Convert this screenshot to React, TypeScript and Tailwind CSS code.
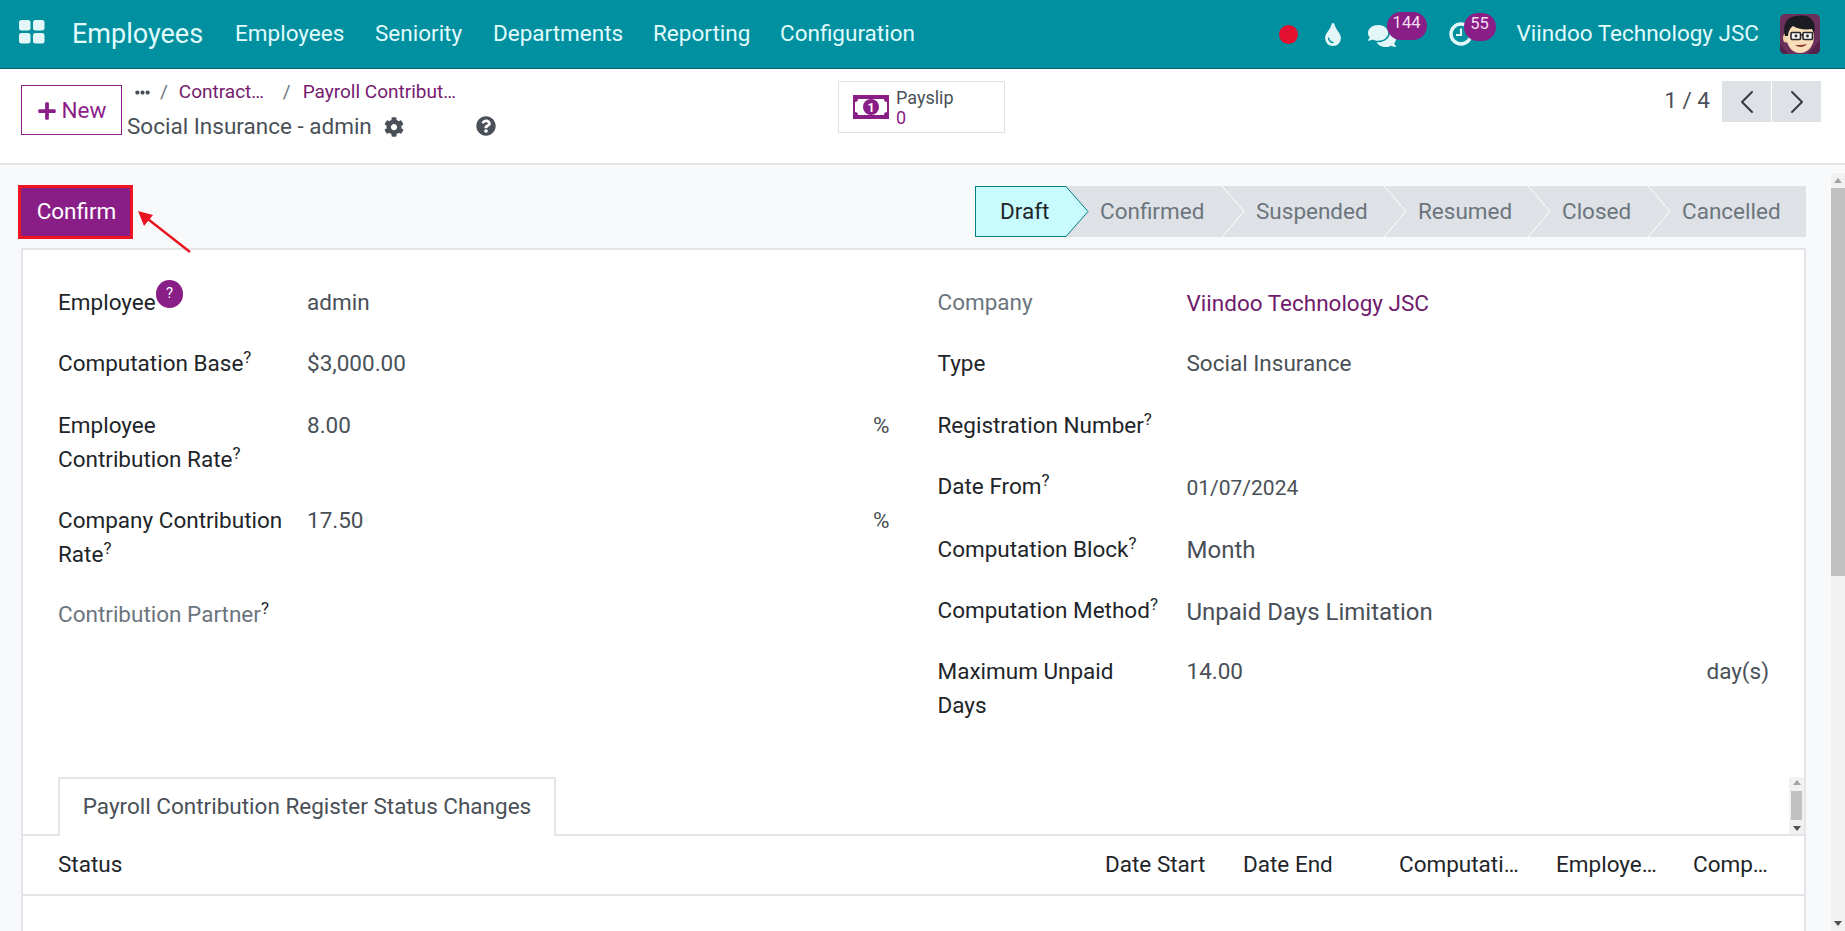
import { ChevronLeft, ChevronRight } from "lucide-react";
import { FaCog, FaComments, FaEllipsisH, FaPlus, FaQuestionCircle, FaTint } from "react-icons/fa";

const menu = [
  { label: "Employees", width: "w-[140px]" },
  { label: "Seniority", width: "w-[118px]" },
  { label: "Departments", width: "w-[160px]" },
  { label: "Reporting", width: "w-[127px]" },
  { label: "Configuration", width: "w-[140px]" },
];

const steps = [
  { label: "Confirmed", width: "w-[156px]", arrow: true },
  { label: "Suspended", width: "w-[162px]", arrow: true },
  { label: "Resumed", width: "w-[144px]", arrow: true },
  { label: "Closed", width: "w-[120px]", arrow: true },
  { label: "Cancelled", width: "w-[158px]", arrow: false },
];

const Sup = () => <sup className="text-[17px] top-[-8px] text-[#212529]">?</sup>;

const Row = ({
  label,
  children,
  unit,
  muted,
  help,
}: {
  label: React.ReactNode;
  children?: React.ReactNode;
  unit?: string;
  muted?: boolean;
  help?: boolean;
}) => (
  <div className="flex pb-[27.4px] leading-[34px]">
    <div className={`w-[249px] shrink-0 pr-[24px] ${muted ? "text-[#6c757d]" : "text-[#212529]"}`}>
      {label}
      {help && <Sup />}
    </div>
    <div className="flex-1 text-[#495057]">{children}</div>
    {unit && <div className="text-[#495057]">{unit}</div>}
  </div>
);

const Avatar = () => (
  <svg viewBox="0 0 40 40" className="w-10 h-10 rounded-[5px] ml-[21px]">
    <rect width="40" height="40" fill="#6b2f5c" />
    <path d="M0 30l8 10H0zM40 26v14H28z" fill="#52224a" />
    <ellipse cx="6" cy="24" rx="3" ry="4.5" fill="#f2d0a4" />
    <path d="M6 20c0 12 6 19 14 19s14-7 14-17c0-6-2-10-4-12H10c-2 2-4 5-4 10z" fill="#f8dfba" />
    <path d="M5 22C2 10 7 3 16 2c5-1 13-1 16 4 3 3 3 9 2 14l-2-5c-7 1-15 0-19-3-3 2-5 6-5 10z" fill="#1b1b22" />
    <rect x="11" y="18.5" width="9.5" height="7" rx="1" fill="#f4f4f0" stroke="#26262c" strokeWidth="1.6" />
    <rect x="23" y="18.5" width="9.5" height="7" rx="1" fill="#f4f4f0" stroke="#26262c" strokeWidth="1.6" />
    <path d="M20.5 21H23" stroke="#26262c" strokeWidth="1.6" />
    <circle cx="16" cy="22" r="1.4" fill="#26262c" />
    <circle cx="27.5" cy="22" r="1.4" fill="#26262c" />
    <path d="M15 31c4 3 9 2.5 12-1-4 1-8 1.300-12 1z" fill="#8c3b35" />
  </svg>
);

const MoneyIcon = () => (
  <svg viewBox="0 0 36 24" className="w-9 h-6 shrink-0">
    <path fillRule="evenodd" fill="#8a1e87" d="M0 0h36v24H0zM5 4c0 2-1 3-3 3v10c2 0 3 1 3 3h26c0-2 1-3 3-3V7c-2 0-3-1-3-3z" />
    <circle cx="18" cy="12" r="8" fill="#8a1e87" />
    <text x="18" y="16.5" textAnchor="middle" fontSize="12.5" fontWeight="700" fill="#fff" fontFamily="Roboto">1</text>
  </svg>
);

export default function App() {
  return (
    <div className="h-[931px] w-[1845px] overflow-hidden flex flex-col bg-white font-['Roboto',sans-serif] text-[22.5px]">
      <header className="h-[69px] shrink-0 bg-[#00909f] border-b border-[#0b5f68] flex items-center text-[#e0fbfd]">
        <svg viewBox="0 0 26 24" className="w-[26px] h-[24px] ml-[19px] -mt-[4px]" fill="#e4f7f8">
          <rect width="11.5" height="10.5" rx="2.5" />
          <rect x="14" width="11.5" height="10.5" rx="2.5" />
          <rect y="13" width="11.5" height="10.5" rx="2.5" />
          <rect x="14" y="13" width="11.5" height="10.5" rx="2.5" />
        </svg>
        <div className="ml-[27px] w-[163px] text-[27px]">Employees</div>
        {menu.map((m) => (
          <div key={m.label} className={`${m.width} text-[22.5px]`}>
            {m.label}
          </div>
        ))}
        <div className="ml-auto flex items-center pr-[25px]">
          <div className="w-[19px] h-[19px] rounded-full bg-[#e3102f]" />
          <div className="ml-[26px] w-[18px] flex justify-center">
            <FaTint className="text-[#e4f7f8]" size={23} />
          </div>
          <div className="relative ml-[26px] w-[28px] h-[25px]">
            <FaComments className="text-[#e4f7f8]" size={28} />
            <span className="absolute left-[19px] -top-[10px] w-[40px] h-[28px] rounded-full bg-[#8a1e87] text-[16.5px] leading-[22px] text-center text-[#f4dff3]">
              144
            </span>
          </div>
          <div className="relative ml-[53px] w-[24px] h-[24px]">
            <svg viewBox="0 0 24 24" className="w-[24px] h-[24px]" fill="none" stroke="#e4f7f8">
              <circle cx="12" cy="12" r="10" strokeWidth="3.4" />
              <path d="M12 6.5V13H7" strokeWidth="2.2" />
            </svg>
            <span className="absolute left-[15px] -top-[9px] w-[32px] h-[28px] rounded-full bg-[#8a1e87] text-[16.5px] leading-[22px] text-center text-[#f4dff3]">
              55
            </span>
          </div>
          <div className="ml-[44px]">Viindoo Technology JSC</div>
          <Avatar />
        </div>
      </header>

      <div className="h-[96px] shrink-0 border-b-2 border-[#e3e5e8] flex relative">
        <div className="w-[838px] pl-[21px] pt-[16px] flex shrink-0">
          <button className="w-[101px] h-[50px] pt-[1px] border border-[#8a1e87] text-[#8a1e87] flex items-center justify-center gap-[5px]">
            <FaPlus size={20} />
            New
          </button>
          <div className="ml-[5px] -mt-[11px]">
            <div className="flex items-center h-[36px] text-[19px] text-[#75206f] pl-[8px]">
              <FaEllipsisH size={15} className="text-[#495057]" />
              <span className="ml-[10px] text-[#6c757d]">/</span>
              <span className="ml-[11px] w-[104px]">Contract…</span>
              <span className="text-[#6c757d]">/</span>
              <span className="ml-[12px]">Payroll Contribut…</span>
            </div>
            <div className="flex items-center h-[34px] text-[#495057]">
              Social Insurance - admin
              <FaCog size={20} className="ml-[12px]" />
              <FaQuestionCircle size={20} className="ml-[72px] -mt-[3px]" />
            </div>
          </div>
        </div>
        <div className="mt-[12px] w-[167px] h-[52px] border border-[#dee2e6] flex items-center pl-[14px] gap-[7px]">
          <MoneyIcon />
          <div className="leading-[20px] text-[18px] mt-[2px]">
            <div className="text-[#495057]">Payslip</div>
            <div className="text-[#8a1e87]">0</div>
          </div>
        </div>
        <div className="ml-auto mt-[12px] pr-[24px] flex items-start">
          <div className="mr-[12px] mt-[3px] text-[#495057]">1 / 4</div>
          <div className="w-[49px] h-[41px] bg-[#dee2e6] flex items-center justify-center text-[#343a40]">
            <ChevronLeft size={40} strokeWidth={1.2} />
          </div>
          <div className="w-[49px] h-[41px] ml-[1px] bg-[#dee2e6] flex items-center justify-center text-[#343a40]">
            <ChevronRight size={40} strokeWidth={1.2} />
          </div>
        </div>
      </div>

      <main className="flex-1 flex min-h-0 bg-[#f8f9fa]">
        <div className="flex-1 min-w-0 pl-[21px] pr-[25px] pt-[21px] flex flex-col">
          <div className="relative flex justify-between h-[62px] shrink-0">
            <button className="-ml-[3px] w-[115px] h-[54px] pl-[2px] border-[3px] border-[#ee1423] bg-[#8a1e87] text-white -mt-[1px]">
              Confirm
            </button>
            <svg viewBox="0 0 56 42" className="absolute left-[115px] top-[25px] w-[56px] h-[42px]" fill="none">
              <path d="M54 41L8 5" stroke="#e8141f" strokeWidth="2.4" />
              <path d="M2 0l15 4-9 11z" fill="#e8141f" />
            </svg>
            <div className="flex h-[51px] bg-[#dee2e6] text-[#6c757d]">
              <div className="relative w-[91px] bg-[#c8fbfd] border-y border-l border-[#017e84] text-[#212529] pl-[24px] leading-[49px]">
                Draft
                <svg viewBox="0 0 23 51" className="absolute left-full -top-[1px] w-[23px] h-[51px] z-10">
                  <path d="M0 0.5L22 25.5L0 50.5" fill="#c8fbfd" stroke="#017e84" />
                </svg>
              </div>
              {steps.map((s) => (
                <div key={s.label} className={`relative ${s.width} pl-[34px] leading-[51px]`}>
                  {s.label}
                  {s.arrow && (
                    <svg viewBox="0 0 23 51" className="absolute left-full top-0 w-[23px] h-[51px] z-10" fill="none" stroke="#ffffff">
                      <path d="M0 0L22 25.5L0 51" />
                    </svg>
                  )}
                </div>
              ))}
            </div>
          </div>

          <div className="flex-1 bg-white border-x-2 border-t-2 border-[#e3e5e8] min-h-0">
            <div className="grid grid-cols-2 gap-x-[48px] px-[35px] pt-[35px]">
              <div>
                <Row
                  label={
                    <span className="relative">
                      Employee
                      <span className="absolute left-[98px] -top-[9px] w-[27px] h-[28px] rounded-full bg-[#8a1e87] text-white text-[15px] leading-[26px] text-center">
                        ?
                      </span>
                    </span>
                  }
                >
                  admin
                </Row>
                <Row label="Computation Base" help>
                  $3,000.00
                </Row>
                <Row label="Employee Contribution Rate" help unit="%">
                  8.00
                </Row>
                <Row label="Company Contribution Rate" help unit="%">
                  17.50
                </Row>
                <div className="-mt-[2px]">
                  <Row label="Contribution Partner" help muted />
                </div>
              </div>
              <div>
                <Row label="Company" muted>
                  <span className="inline-block translate-y-[1px] text-[#6f1a6b]">Viindoo Technology JSC</span>
                </Row>
                <Row label="Type">Social Insurance</Row>
                <Row label="Registration Number" help />
                <Row label="Date From" help>
                  <span className="inline-block translate-y-[1px] text-[21px]">01/07/2024</span>
                </Row>
                <Row label="Computation Block" help>
                  <span className="inline-block translate-y-[1px] text-[24px]">Month</span>
                </Row>
                <Row label="Computation Method" help>
                  <span className="inline-block translate-y-[2px] text-[24px]">Unpaid Days Limitation</span>
                </Row>
                <Row label="Maximum Unpaid Days" unit="day(s)">
                  14.00
                </Row>
              </div>
            </div>

            <div className="mt-[27px] h-[59px] border-b-2 border-[#e3e5e8] flex justify-between pl-[35px]">
              <div className="w-[498px] h-[59px] border-x-2 border-t-2 border-[#e3e5e8] bg-white flex items-center justify-center text-[#495057]">
                Payroll Contribution Register Status Changes
              </div>
              <div className="w-[15px] h-[57px] bg-[#f1f1f1] flex flex-col items-center justify-between py-[3px]">
                <div className="w-0 h-0 border-x-[4px] border-b-[5px] border-x-transparent border-b-[#a3a3a3]" />
                <div className="w-[11px] h-[29px] bg-[#c1c1c1]" />
                <div className="w-0 h-0 border-x-[4px] border-t-[5px] border-x-transparent border-t-[#505050]" />
              </div>
            </div>
            <div className="h-[60px] border-b-2 border-[#e3e5e8] flex items-center pl-[35px] text-[#212529]">
              <div className="w-[1047px]">Status</div>
              <div className="w-[138px]">Date Start</div>
              <div className="w-[156px]">Date End</div>
              <div className="w-[157px]">Computati…</div>
              <div className="w-[137px]">Employe…</div>
              <div>Comp…</div>
            </div>
          </div>
        </div>

        <div className="w-[14px] mt-[8px] bg-[#f1f1f1] flex flex-col items-center py-[5px] shrink-0">
          <div className="w-0 h-0 border-x-[4px] border-b-[5px] border-x-transparent border-b-[#a3a3a3]" />
          <div className="w-[14px] h-[388px] bg-[#c1c1c1] mt-[5px]" />
          <div className="mt-auto w-0 h-0 border-x-[4px] border-t-[5px] border-x-transparent border-t-[#505050]" />
        </div>
      </main>
    </div>
  );
}
